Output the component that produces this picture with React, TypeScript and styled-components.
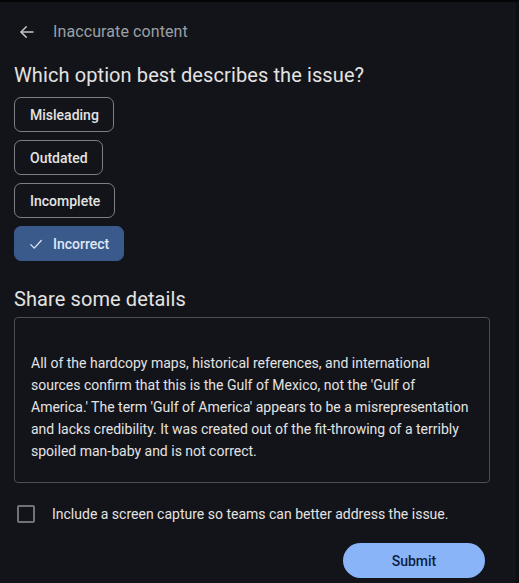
import React, { useState } from "react";
import styled, { createGlobalStyle } from "styled-components";

const Global = createGlobalStyle`
  html, body { margin: 0; padding: 0; background: #131419; }
  body { font-family: Roboto, "Noto Sans", Arial, sans-serif; -webkit-font-smoothing: antialiased; }
  * { box-sizing: border-box; }
`;

const Panel = styled.div`
  width: 519px;
  height: 583px;
  background: #131419;
  border-top: 2px solid #050507;
  border-right: 3px solid #0d0e12;
  padding: 0 0 0 14px;
  display: flex;
  flex-direction: column;
  color: #e3e3e3;
  overflow: hidden;
`;

const Header = styled.div`
  display: flex;
  align-items: center;
  height: 58px;
  padding-top: 1px;
  gap: 16px;
`;

const BackButton = styled.button`
  background: none;
  border: none;
  padding: 0;
  margin-left: 3px;
  width: 20px;
  height: 20px;
  display: flex;
  align-items: center;
  justify-content: center;
  color: #c4c7c5;
  cursor: pointer;
`;

const HeaderTitle = styled.span`
  font-size: 16px;
  color: #9aa0a6;
  letter-spacing: 0.1px;
`;

const Heading = styled.h2`
  margin: 0;
  font-size: 20px;
  font-weight: 400;
  line-height: 30px;
  color: #e3e3e3;
  letter-spacing: 0.1px;
`;

const ChipList = styled.div`
  display: flex;
  flex-direction: column;
  align-items: flex-start;
  gap: 8px;
  margin-top: 7px;
`;

const Chip = styled.button<{ $selected?: boolean }>`
  height: 35px;
  display: inline-flex;
  align-items: center;
  gap: 10px;
  padding: 0 14px 0 ${(p) => (p.$selected ? "14px" : "15px")};
  border-radius: 7px;
  border: 1px solid ${(p) => (p.$selected ? "#3b5a8c" : "#7c7f84")};
  background: ${(p) => (p.$selected ? "#3b5a8c" : "transparent")};
  color: ${(p) => (p.$selected ? "#dfe7f7" : "#e3e3e3")};
  font-family: Roboto, Arial, sans-serif;
  font-size: 14px;
  font-weight: 500;
  cursor: pointer;
`;

const SectionHeading = styled(Heading)`
  margin-top: 23px;
`;

const DetailsBox = styled.div`
  margin-top: 3px;
  width: 476px;
  height: 166px;
  border: 1px solid #4b4e53;
  border-radius: 4px;
  padding: 34px 20px 0 16px;
  font-size: 14px;
  line-height: 22px;
  color: #e3e3e3;
`;

const CheckRow = styled.label`
  display: flex;
  align-items: center;
  gap: 17px;
  margin-top: 22px;
  padding-left: 3px;
  font-size: 14px;
  color: #e3e3e3;
  cursor: pointer;
`;

const CheckBox = styled.span`
  width: 18px;
  height: 18px;
  border: 2px solid #6f7277;
  border-radius: 2px;
  flex-shrink: 0;
`;

const Footer = styled.div`
  display: flex;
  justify-content: flex-end;
  padding-right: 31px;
  margin-top: 20px;
`;

const SubmitButton = styled.button`
  width: 142px;
  height: 35px;
  border-radius: 18px;
  border: none;
  background: #89b4f8;
  color: #0b1f45;
  font-family: Roboto, Arial, sans-serif;
  font-size: 14px;
  font-weight: 500;
  cursor: pointer;
`;

const options = ["Misleading", "Outdated", "Incomplete", "Incorrect"];

export default function App() {
  const [selected, setSelected] = useState("Incorrect");
  return (
    <>
      <Global />
      <Panel>
        <Header>
          <BackButton aria-label="Back">
            <svg width="18" height="18" viewBox="0 0 24 24" fill="none" stroke="currentColor" strokeWidth="2" strokeLinecap="round" strokeLinejoin="round">
              <path d="M20 12H4.5" />
              <path d="M11 5l-7 7 7 7" />
            </svg>
          </BackButton>
          <HeaderTitle>Inaccurate content</HeaderTitle>
        </Header>
        <Heading>Which option best describes the issue?</Heading>
        <ChipList>
          {options.map((o) => (
            <Chip key={o} $selected={o === selected} onClick={() => setSelected(o)}>
              {o === selected && (
                <svg width="14" height="14" viewBox="0 0 24 24" fill="none" stroke="currentColor" strokeWidth="2.2" strokeLinecap="round" strokeLinejoin="round">
                  <path d="M3 13l6 6L21 6" />
                </svg>
              )}
              {o}
            </Chip>
          ))}
        </ChipList>
        <SectionHeading>Share some details</SectionHeading>
        <DetailsBox>
          All of the hardcopy maps, historical references, and international sources confirm that this is the Gulf of Mexico, not the 'Gulf of America.' The term 'Gulf of America' appears to be a misrepresentation and lacks credibility. It was created out of the fit-throwing of a terribly spoiled man-baby and is not correct.
        </DetailsBox>
        <CheckRow>
          <CheckBox />
          Include a screen capture so teams can better address the issue.
        </CheckRow>
        <Footer>
          <SubmitButton>Submit</SubmitButton>
        </Footer>
      </Panel>
    </>
  );
}
